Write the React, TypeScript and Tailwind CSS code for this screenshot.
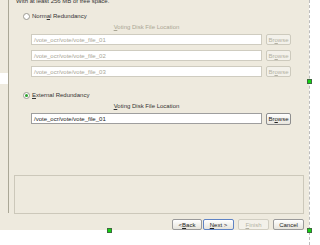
import React from "react"

const Radio = ({ checked }: { checked?: boolean }) => (
  <div className="w-[7px] h-[7px] rounded-full border border-[#9c9a92] bg-white flex items-center justify-center shrink-0">
    {checked && <div className="w-[3px] h-[3px] rounded-full bg-[#2aa22a]" />}
  </div>
)

const PathRow = ({ value, enabled }: { value: string; enabled?: boolean }) => (
  <div className="flex items-start gap-[4px] ml-[22px]">
    <div
      className={
        enabled
          ? "w-[231px] h-[11px] border border-[#9e9e9e] bg-white flex items-center pl-[2px] text-[#222]"
          : "w-[231px] h-[11px] border border-[#cfccc0] bg-white flex items-center pl-[2px] text-[#a9a697]"
      }
    >
      {value}
    </div>
    <div
      className={
        enabled
          ? "w-[25px] h-[12px] rounded-[2px] border border-[#8e8e8e] bg-gradient-to-b from-white to-[#e8e6de] flex items-center justify-center text-[#222]"
          : "w-[25px] h-[11px] rounded-[2px] border border-[#cdcabd] bg-[#f3f1ea] flex items-center justify-center text-[#b4b1a3]"
      }
    >
      Br<u>o</u>wse
    </div>
  </div>
)

const Btn = ({ children, w, kind }: { children: React.ReactNode; w: string; kind?: "focus" | "off" }) => {
  let cls = "h-[11px] rounded-[2px] flex items-center justify-center border "
  if (kind === "focus") cls += "border-[#5f83c4] bg-gradient-to-b from-white to-[#e6e4dc] text-[#222]"
  else if (kind === "off") cls += "border-[#d1cec2] bg-[#f3f1ea] text-[#b4b1a3]"
  else cls += "border-[#9a9a9a] bg-gradient-to-b from-white to-[#e6e4dc] text-[#222]"
  return <div className={cls + " " + w}>{children}</div>
}

const Handle = ({ pos }: { pos: string }) => (
  <div className={"absolute w-[5px] h-[5px] bg-[#12d412] border border-[#3d6b3d] " + pos} />
)

export default function App() {
  return (
    <div
      className="relative w-[320px] h-[245px] bg-white overflow-hidden flex text-[6px] leading-[8px]"
      style={{ fontFamily: '"Liberation Sans", Arial, sans-serif' }}
    >
      <div className="w-[309px] h-[230px] bg-[#eeeade] flex shrink-0">
        {/* left steps list */}
        <div className="w-[9px] h-[213px] border-r border-[#aaa796] shrink-0">
          <div className="mt-[73px] h-[11px] w-[8px] bg-white" />
        </div>

        <div className="flex flex-col flex-1 text-[#333]">
          <div className="mt-[-3px] ml-[7px] h-[8px] whitespace-nowrap">With at least 256 MB of free space.</div>

          <div className="mt-[7px] ml-[14px] h-[8px] flex items-center gap-[2px] whitespace-nowrap">
            <Radio />
            <span>Norm<u>a</u>l Redundancy</span>
          </div>
          <div className="mt-[3px] ml-[22px] w-[231px] h-[8px] text-center text-[#aaa795]">
            <u>V</u>oting Disk File Location
          </div>
          <div className="mt-[3px] flex flex-col gap-[5px]">
            <PathRow value="/vote_ocr/vote/vote_file_01" />
            <PathRow value="/vote_ocr/vote/vote_file_02" />
            <PathRow value="/vote_ocr/vote/vote_file_03" />
          </div>

          <div className="mt-[14px] ml-[14px] h-[8px] flex items-center gap-[2px] whitespace-nowrap">
            <Radio checked />
            <span><u>E</u>xternal Redundancy</span>
          </div>
          <div className="mt-[3px] ml-[22px] w-[231px] h-[8px] text-center">
            <u>V</u>oting Disk File Location
          </div>
          <div className="mt-[3px]">
            <PathRow value="/vote_ocr/vote/vote_file_01" enabled />
          </div>

          <div className="mt-[50px] ml-[5px] w-[290px] h-[39px] border border-[#ccc8ba]" />

          <div className="mt-[5px] w-[295px] flex justify-end">
            <Btn w="w-[30px]">&lt; <u>B</u>ack</Btn>
            <div className="w-[1px]" />
            <Btn w="w-[31px]" kind="focus"><u>N</u>ext &gt;</Btn>
            <div className="w-[4px]" />
            <Btn w="w-[31px]" kind="off"><u>F</u>inish</Btn>
            <div className="w-[4px]" />
            <Btn w="w-[31px]">Cancel</Btn>
          </div>
        </div>
      </div>
      {/* designer guide line */}
      <div className="h-[245px] border-l border-dashed border-[#bdbdbd]" />

      <Handle pos="left-[307px] top-[79px]" />
      <Handle pos="left-[307px] top-[228px]" />
      <Handle pos="left-[107px] top-[228px]" />
    </div>
  )
}
